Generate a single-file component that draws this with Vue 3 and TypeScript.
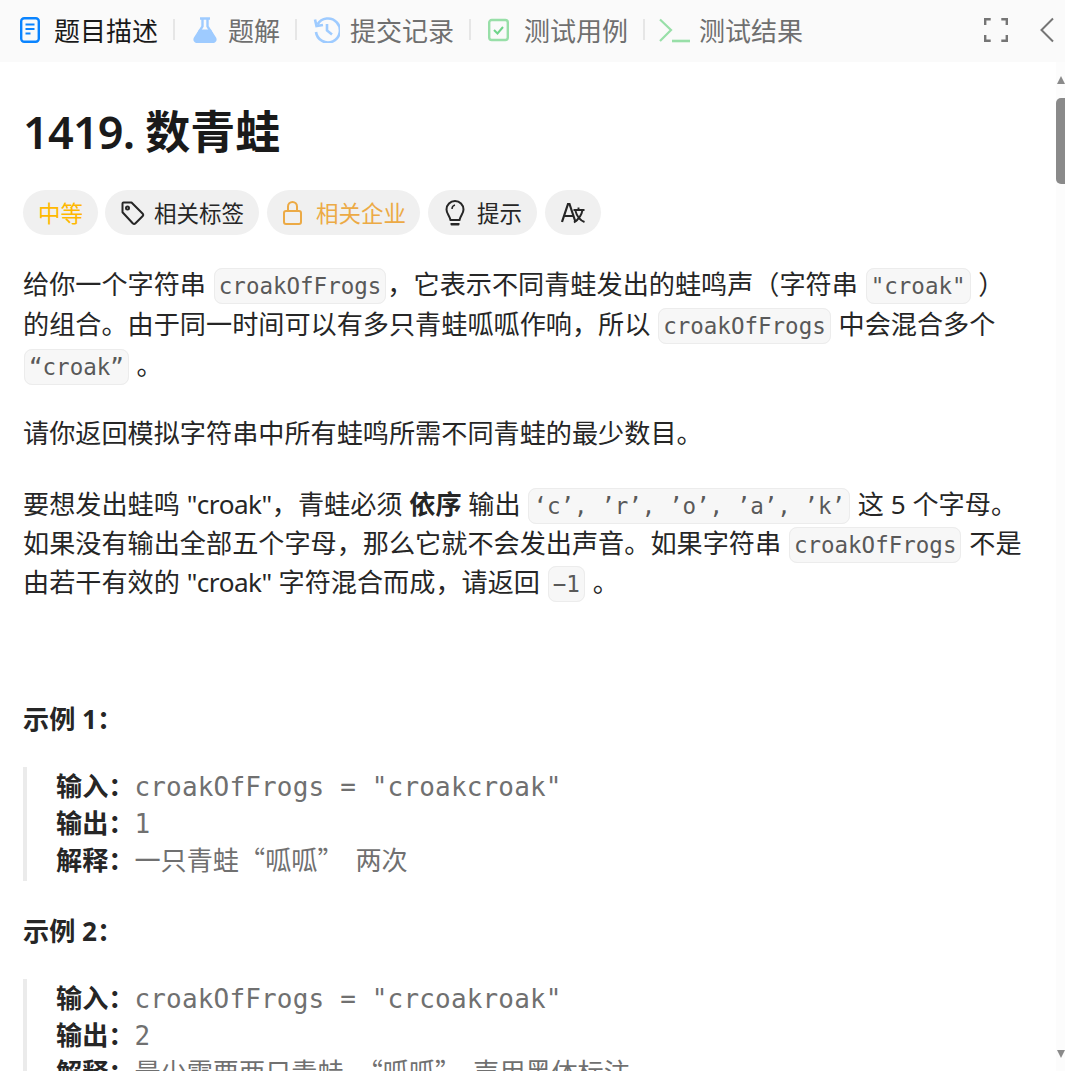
<script setup lang="ts">
const COMMA = '\uFF0C'
const COLON = '\uFF1A'
const labels = [`输入${COLON}`, `输出${COLON}`, `解释${COLON}`]
const examples = [
  { title: `示例 1${COLON}`, values: ['croakOfFrogs = "croakcroak"', '1', '一只青蛙“呱呱” 两次'] },
  { title: `示例 2${COLON}`, values: ['croakOfFrogs = "crcoakroak"', '2', `最少需要两只青蛙${COMMA}“呱呱” 声用黑体标注`] },
]
</script>

<template>
  <div class="page">
    <header class="tabs">
      <div class="tab active">
        <svg width="20" height="26" viewBox="0 0 20 26" fill="none">
          <rect x="1.200" y="1.200" width="17.600" height="23.600" rx="3" stroke="#0a84ff" stroke-width="2.400" />
          <path d="M5.500 7.500h9M5.500 12h9M5.500 16.500h5" stroke="#0a84ff" stroke-width="2.200" />
        </svg>
        <span>题目描述</span>
      </div>
      <i class="sep s1"></i>
      <div class="tab t2">
        <svg width="24" height="26" viewBox="0 0 24 26">
          <path d="M7 1.500h10M9.500 2v7.500L2 21c-1 2 0 4 2.500 4h15c2.500 0 3.500-2 2.500-4L14.500 9.500V2" fill="none" stroke="#9ecbff" stroke-width="2.400" />
          <path d="M6 12.500h12l4 9c.6 1.800-.4 3.500-2.500 3.500h-15c-2.100 0-3.100-1.700-2.500-3.500z" fill="#9ecbff" />
        </svg>
        <span>题解</span>
      </div>
      <i class="sep s2"></i>
      <div class="tab t3">
        <svg width="27" height="26" viewBox="0 0 27 26" fill="none" stroke="#9ecbff" stroke-width="2.600">
          <path d="M4.500 7.500A12 12 0 1 1 3 15" />
          <path d="M2 2.500l1.500 6.500 6.500-1" />
          <path d="M14 7v6.500l5 4" />
        </svg>
        <span>提交记录</span>
      </div>
      <i class="sep s3"></i>
      <div class="tab t4">
        <svg width="21" height="24" viewBox="0 0 21 24" fill="none">
          <rect x="1.200" y="2" width="18.600" height="20" rx="2.500" stroke="#98dfa8" stroke-width="2.400" />
          <path d="M6 12l3.500 3.500L15 9" stroke="#6fd48a" stroke-width="2" />
        </svg>
        <span>测试用例</span>
      </div>
      <i class="sep s4"></i>
      <div class="tab t5">
        <svg width="31" height="26" viewBox="0 0 31 26" fill="none" stroke="#98dfa8" stroke-width="2.200">
          <path d="M1 2.500L12 13 1 24" />
          <path d="M13 24h18" stroke-width="2.600" />
        </svg>
        <span>测试结果</span>
      </div>
      <div class="tools">
        <svg width="24" height="26" viewBox="0 0 24 26" fill="none" stroke="#757575" stroke-width="2.400">
          <path d="M1.200 8V2.200h5.500M17.300 2.200h5.500V8M1.200 18v5.800h5.500M17.300 23.800h5.500V18" />
        </svg>
        <svg width="14" height="26" viewBox="0 0 14 26" fill="none" stroke="#757575" stroke-width="2">
          <path d="M13 1.500L1.500 13 13 24.500" />
        </svg>
      </div>
    </header>

    <main class="content">
      <h1><span class="num">1419. </span><span class="cjk">数青蛙</span></h1>
      <div class="chips">
        <div class="chip easy">中等</div>
        <div class="chip tag">
          <svg width="26" height="26" viewBox="0 0 26 26" fill="none" stroke="#262626" stroke-width="2">
            <path d="M2.500 3.500a1 1 0 0 1 1-1h8l11 11a2 2 0 0 1 0 2.800l-7 7a2 2 0 0 1-2.800 0l-10.200-11z" stroke-linejoin="round" />
            <circle cx="7.500" cy="8" r="1.500" />
          </svg>
          <span>相关标签</span>
        </div>
        <div class="chip gold">
          <svg width="22" height="26" viewBox="0 0 22 26" fill="none" stroke="#ecaa45" stroke-width="2">
            <rect x="2" y="11" width="17" height="13" rx="2" />
            <path d="M6 11V6.500a4.500 4.500 0 0 1 9 0V11" />
          </svg>
          <span>相关企业</span>
        </div>
        <div class="chip hint">
          <svg width="22" height="28" viewBox="0 0 22 28" fill="none" stroke="#262626" stroke-width="2">
            <path d="M11 2a8.500 8.500 0 0 0-8.500 8.500c0 4 3 6 4 10.500h9c1-4.500 4-6.500 4-10.500A8.500 8.500 0 0 0 11 2z" />
            <path d="M6.500 24h9v1.500a1 1 0 0 1-1 1h-7a1 1 0 0 1-1-1z" fill="#262626" stroke="none" />
            <path d="M8 10c0-2 1-3.500 3-4" stroke-width="1.500" />
          </svg>
          <span>提示</span>
        </div>
        <div class="chip lang">
          <svg width="24" height="22" viewBox="0 0 24 22" fill="none" stroke="#262626" stroke-width="2.200">
            <path d="M1 20L7 2h1.500L14.500 20M3.500 14h8.500" />
            <path d="M12.500 8h11M17.500 5.500V8M21.500 8c-.8 5-3.500 9-8.500 12.500M14.500 9c1.300 5 4 9 9 11" stroke-width="1.900" />
          </svg>
        </div>
      </div>

      <div class="desc">
        <p>给你一个字符串 <code>croakOfFrogs</code>&#xFF0C;它表示不同青蛙发出的蛙鸣声&#xFF08;字符串 <code>"croak"</code> &#xFF09;的组合。由于同一时间可以有多只青蛙呱呱作响&#xFF0C;所以 <code>croakOfFrogs</code> 中会混合多个 <code>“croak”</code> 。</p>
        <p class="second">请你返回模拟字符串中所有蛙鸣所需不同青蛙的最少数目。</p>
        <p class="tight">要想发出蛙鸣 <span class="q">"croak"</span>&#xFF0C;青蛙必须 <strong>依序</strong> 输出 <code>‘c’, ’r’, ’o’, ’a’, ’k’</code> 这 5 个字母。如果没有输出全部五个字母&#xFF0C;那么它就不会发出声音。如果字符串 <code>croakOfFrogs</code> 不是由若干有效的 <span class="q">"croak"</span> 字符混合而成&#xFF0C;请返回 <code>−1</code> 。</p>
      </div>

      <section v-for="ex in examples" :key="ex.title" class="example">
        <strong class="ex-title">{{ ex.title }}</strong>
        <div class="quote">
          <div v-for="(value, i) in ex.values" :key="i"><b>{{ labels[i] }}</b><span :class="i === 2 ? 'prose' : 'm'">{{ value }}</span></div>
        </div>
      </section>
    </main>

    <div class="scrollbar">
      <i class="arrow up"></i>
      <i class="thumb"></i>
      <i class="arrow down"></i>
    </div>
  </div>
</template>

<style>
html, body { margin: 0; background: #fff; overflow: hidden; }
</style>

<style scoped>
.page {
  position: relative;
  width: 1065px;
  height: 1071px;
  overflow: hidden;
  background: #fff;
  color: #262626;
  font-family: "Noto Sans", "Noto Sans CJK SC", sans-serif;
}
.tabs {
  height: 62px;
  box-sizing: border-box;
  padding: 0 0 3px 20px;
  background: #fafafa;
  display: flex;
  align-items: center;
  font-size: 26px;
  color: #6f6f6f;
}
.tab { display: flex; align-items: center; gap: 14px; }
.tab.active { color: #1a1a1a; }
.sep { width: 2px; height: 21px; background: #e6e6e6; }
.s1 { margin: 0 18px 0 15px; }
.s2 { margin: 0 16px 0 15px; }
.s3 { margin: 0 17px 0 15px; }
.s4 { margin: 0 14px 0 15px; }
.t2 { gap: 11px; }
.t3 { gap: 10px; }
.t4 { gap: 15px; }
.t5 { gap: 9px; }
.tools { margin-left: auto; display: flex; align-items: center; gap: 32px; padding-right: 11px; }

.content { padding: 0 38px 0 23px; }
h1 {
  margin: 0;
  padding-top: 37px;
  font-size: 45px;
  line-height: 66px;
  font-weight: 700;
  color: #1a1a1a;
}
.num { font-weight: 600; letter-spacing: -.8px; }
.chips { display: flex; gap: 8px; margin-top: 25px; }
.chip {
  height: 45px;
  border-radius: 23px;
  background: #f0f0f0;
  display: flex;
  align-items: center;
  gap: 8px;
  padding: 0 15px;
  font-size: 22.500px;
  color: #262626;
}
.tag { margin-left: -1px; }
.easy { color: #ffb800; }
.gold { color: #ecaa45; gap: 12px; padding-right: 14px; }
.hint { gap: 11px; padding: 0 15px 0 16px; }
.lang { width: 56px; padding: 0; justify-content: center; box-sizing: border-box; }

.desc { margin-top: 29px; font-size: 26.150px; line-height: 40.300px; color: #262626; }
.desc p { margin: 0 0 28px; }
.desc p.second { margin-bottom: 32px; }
.desc p.tight { line-height: 39px; }
.q { letter-spacing: -.5px; }
code {
  font-family: "DejaVu Sans Mono", monospace;
  font-size: 22.500px;
  line-height: 30px;
  color: #595959;
  background: #f7f7f7;
  border: 1px solid #ececec;
  border-radius: 8px;
  padding: 4px;
  margin: 0 1px;
}
.desc + .example { margin-top: 97px; }
.example + .example { margin-top: 30px; }
.ex-title { display: block; font-size: 26.150px; line-height: 40px; font-weight: 700; }
.quote {
  margin-top: 28px;
  border-left: 4px solid #ebebeb;
  padding: 1px 0 0 29px;
  font-size: 26.150px;
  line-height: 37px;
  height: 113px;
  color: #707070;
}
.quote > div { height: 37px; }
.quote b { color: #262626; font-weight: 700; }
.m { font-family: "DejaVu Sans Mono", monospace; font-size: 26px; letter-spacing: .17px; }
.prose { font-family: "Noto Sans CJK SC", sans-serif; word-spacing: 6px; line-height: 1; }

.scrollbar { position: absolute; right: 0; top: 62px; bottom: 0; width: 9px; background: #fcfcfc; }
.arrow { position: absolute; left: 1px; width: 0; height: 0; border-left: 4px solid transparent; border-right: 4px solid transparent; }
.up { top: 14px; border-bottom: 8px solid #8a8a8a; }
.down { bottom: 13px; border-top: 8px solid #8a8a8a; }
.thumb { position: absolute; left: 0; top: 36px; width: 9px; height: 86px; background: #8a8a8a; border-radius: 5px 0 0 5px; }
</style>
